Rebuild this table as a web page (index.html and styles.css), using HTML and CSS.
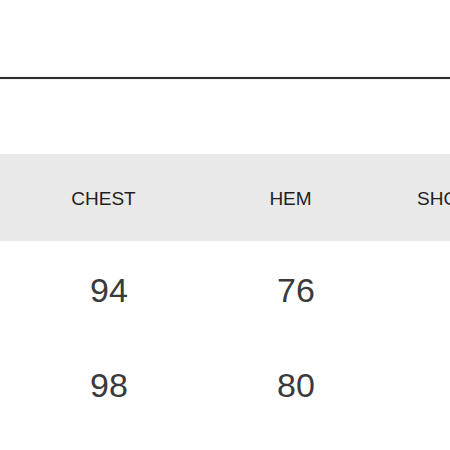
FILE: index.html
```html
<!DOCTYPE html>
<html>
<head>
<meta charset="utf-8">
<link rel="stylesheet" href="styles.css">
</head>
<body>
<div class="page">
  <div class="rule"></div>
  <div class="table">
    <div class="row head">
      <div class="cell">CHEST</div>
      <div class="cell">HEM</div>
      <div class="cell last">SHOULDER</div>
    </div>
    <div class="row num">
      <div class="cell">94</div>
      <div class="cell">76</div>
      <div class="cell"></div>
    </div>
    <div class="row num">
      <div class="cell">98</div>
      <div class="cell">80</div>
      <div class="cell"></div>
    </div>
  </div>
</div>
</body>
</html>
```
FILE: styles.css
```css
html, body {
  margin: 0;
  padding: 0;
  background: #fff;
  overflow: hidden;
}
.page {
  width: 450px;
  height: 450px;
  overflow: hidden;
  padding-top: 77px;
  box-sizing: border-box;
  font-family: "Liberation Sans", Arial, sans-serif;
}
.rule {
  height: 2px;
  background: #2e2e2e;
  box-shadow: 0 0 1px #777;
}
.table {
  margin-top: 75px;
  width: 600px;
}
.row {
  display: grid;
  grid-template-columns: 187px 187px 187px;
  align-items: center;
  padding-left: 10px;
}
.head {
  height: 87px;
  background: #e9e9e9;
  font-size: 19px;
  color: #1f1f1f;
}
.head .cell {
  text-align: center;
  padding-top: 2px;
}
.head .cell.last {
  text-align: left;
  padding-left: 33px;
}
.num {
  height: 95px;
  font-size: 34px;
  color: #3a3a3a;
}
.num .cell {
  text-align: center;
  padding-left: 11px;
  padding-top: 4px;
}
```
